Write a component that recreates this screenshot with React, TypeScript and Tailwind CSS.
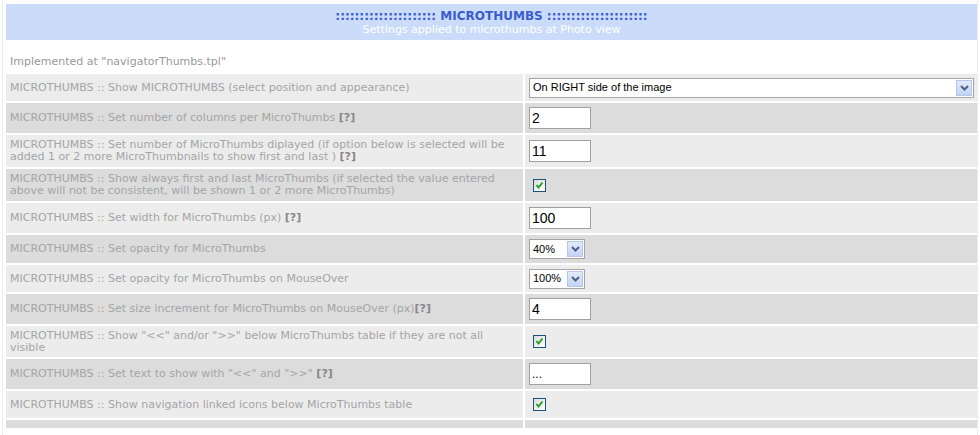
const labelFont = { fontFamily: '"DejaVu Sans", Verdana, sans-serif' };

function Help() {
  return <span className="font-bold text-[#888888]">[?]</span>;
}

function Arrow() {
  return (
    <span className="flex h-[16px] w-[16px] items-center justify-center border border-[#b5c7ea] bg-gradient-to-b from-[#e3ebfb] to-[#c3d4f6]">
      <svg width="9" height="6" viewBox="0 0 9 6">
        <path d="M1 1 L4.5 4.5 L8 1" fill="none" stroke="#4d6185" strokeWidth="2" />
      </svg>
    </span>
  );
}

function Select({ value, wide }: { value: string; wide?: boolean }) {
  return (
    <div
      className={
        "flex h-[20px] items-center justify-between border border-[#a5a5a5] bg-white pl-[3px] pr-[1px] text-[11px] text-black " +
        (wide ? "w-[445px]" : "w-[56px]")
      }
      style={{ fontFamily: '"Liberation Sans", Arial, sans-serif' }}
    >
      <span>{value}</span>
      <Arrow />
    </div>
  );
}

function TextBox({ value, small }: { value: string; small?: boolean }) {
  return (
    <div
      className={
        "flex h-[22px] w-[62px] items-center border border-[#a0a0a0] bg-white pl-[2px] text-black " +
        (small ? "text-[12px]" : "text-[14px]")
      }
      style={{ fontFamily: '"Liberation Sans", Arial, sans-serif' }}
    >
      {value}
    </div>
  );
}

function Check() {
  return (
    <div className="ml-[4px] flex h-[13px] w-[13px] items-center justify-center border border-[#1c5180] bg-gradient-to-br from-[#dcdcd7] to-white">
      <svg width="9" height="9" viewBox="0 0 9 9">
        <path d="M1.5 4 L3.5 6.5 L7.5 1.5" fill="none" stroke="#21a121" strokeWidth="2" />
      </svg>
    </div>
  );
}

type Row = { label: React.ReactNode; control: React.ReactNode; h: string };

const rows: Row[] = [
  {
    label: "MICROTHUMBS :: Show MICROTHUMBS (select position and appearance)",
    control: <Select value="On RIGHT side of the image" wide />,
    h: "h-[27px]",
  },
  {
    label: (
      <>
        MICROTHUMBS :: Set number of columns per MicroThumbs <Help />
      </>
    ),
    control: <TextBox value="2" />,
    h: "h-[30px]",
  },
  {
    label: (
      <>
        MICROTHUMBS :: Set number of MicroThumbs diplayed (if option below is selected will be added 1 or 2 more
        MicroThumbnails to show first and last ) <Help />
      </>
    ),
    control: <TextBox value="11" />,
    h: "h-[32px]",
  },
  {
    label:
      "MICROTHUMBS :: Show always first and last MicroThumbs (if selected the value entered above will not be consistent, will be shown 1 or 2 more MicroThumbs)",
    control: <Check />,
    h: "h-[32px]",
  },
  {
    label: (
      <>
        MICROTHUMBS :: Set width for MicroThumbs (px) <Help />
      </>
    ),
    control: <TextBox value="100" />,
    h: "h-[30px]",
  },
  {
    label: "MICROTHUMBS :: Set opacity for MicroThumbs",
    control: <Select value="40%" />,
    h: "h-[28px]",
  },
  {
    label: "MICROTHUMBS :: Set opacity for MicroThumbs on MouseOver",
    control: <Select value="100%" />,
    h: "h-[27px]",
  },
  {
    label: (
      <>
        MICROTHUMBS :: Set size increment for MicroThumbs on MouseOver (px)
        <Help />
      </>
    ),
    control: <TextBox value="4" />,
    h: "h-[30px]",
  },
  {
    label: 'MICROTHUMBS :: Show "<<" and/or ">>" below MicroThumbs table if they are not all visible',
    control: <Check />,
    h: "h-[31px]",
  },
  {
    label: (
      <>
        MICROTHUMBS :: Set text to show with "&lt;&lt;" and "&gt;&gt;" <Help />
      </>
    ),
    control: <TextBox value="..." small />,
    h: "h-[30px]",
  },
  {
    label: "MICROTHUMBS :: Show navigation linked icons below MicroThumbs table",
    control: <Check />,
    h: "h-[27px]",
  },
  { label: "", control: null, h: "h-[8px]" },
];

export default function App() {
  return (
    <div className="min-h-screen bg-white pl-[2px]" style={labelFont}>
      <div className="w-[976px] border-x border-[#ececec] pl-[3px] pt-[4px] pb-[7px]">
        <div className="flex h-[36px] flex-col items-center bg-[#cbdcfa] pt-[5px]">
          <div className="text-[12px] font-bold leading-[14px] text-[#3a5ccc]">
            ::::::::::::::::::::: MICROTHUMBS :::::::::::::::::::::
          </div>
          <div className="text-[11px] leading-[14px] text-white">Settings applied to microthumbs at Photo view</div>
        </div>

        <div className="h-[34px] pl-[4px] pt-[15px] text-[11px] leading-[13px] text-[#999999]">
          Implemented at "navigatorThumbs.tpl"
        </div>

        <div className="flex flex-col gap-[2px]">
          {rows.map((r, i) => {
            const bg = i % 2 === 0 ? "bg-[#ececec]" : "bg-[#dcdcdc]";
            return (
              <div key={i} className={"grid grid-cols-[517px_452px] gap-x-[2px] " + r.h}>
                <div className={"flex items-center px-[4px] text-[11px] leading-[12px] text-[#a5a5a5] " + bg}>
                  <div>{r.label}</div>
                </div>
                <div className={"flex items-center pl-[4px] " + bg}>{r.control}</div>
              </div>
            );
          })}
        </div>
      </div>
    </div>
  );
}
